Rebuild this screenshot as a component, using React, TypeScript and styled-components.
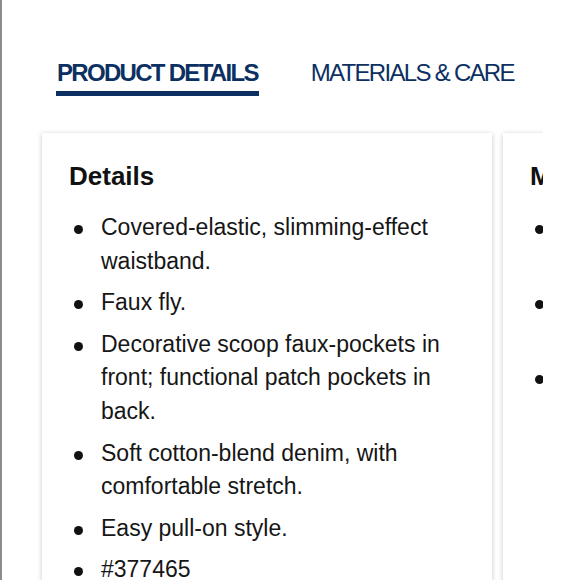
import React from 'react';
import styled, { createGlobalStyle } from 'styled-components';

const GlobalStyle = createGlobalStyle`
  html, body {
    margin: 0;
    padding: 0;
    background: #ffffff;
  }
  body {
    font-family: "Liberation Sans", Arial, sans-serif;
  }
`;

const tabs = [
  { id: 'details', label: 'PRODUCT DETAILS' },
  { id: 'care', label: 'MATERIALS & CARE' },
];

const sections = [
  {
    title: 'Details',
    items: [
      'Covered-elastic, slimming-effect waistband.',
      'Faux fly.',
      'Decorative scoop faux-pockets in front; functional patch pockets in back.',
      'Soft cotton-blend denim, with comfortable stretch.',
      'Easy pull-on style.',
      '#377465',
    ],
  },
  {
    title: 'Materials & Care',
    items: [
      'Cotton/polyester/spandex, stretch denim blend.',
      'Machine wash cold, tumble dry low heat.',
      'Imported.',
    ],
  },
];

const App: React.FC = () => {
  const active = 'details';

  return (
    <>
      <GlobalStyle />
      <Page>
        <TabBar>
          {tabs.map(tab => (
            <Tab key={tab.id} active={tab.id === active}>
              {tab.label}
            </Tab>
          ))}
        </TabBar>
        <Viewport>
          <Track>
            {sections.map(section => (
              <Card key={section.title}>
                <CardTitle>{section.title}</CardTitle>
                <List>
                  {section.items.map(item => (
                    <Item key={item}>{item}</Item>
                  ))}
                </List>
              </Card>
            ))}
          </Track>
        </Viewport>
      </Page>
    </>
  );
};

const Page = styled.div`
  box-sizing: border-box;
  height: 580px;
  overflow: hidden;
  border-left: 2px solid #8c8c8c;
  padding-left: 34px;
`;

const TabBar = styled.nav`
  display: flex;
  gap: 51px;
  padding: 58px 0 0 20px;
`;

const Tab = styled.button<{ active: boolean }>`
  border: none;
  background: none;
  margin: 0;
  padding: 0 1px 3px;
  white-space: nowrap;
  font-family: "Liberation Sans", Arial, sans-serif;
  font-size: 24px;
  line-height: 30px;
  letter-spacing: -1.7px;
  font-weight: ${props => (props.active ? 700 : 400)};
  color: #0c3061;
  border-bottom: 5px solid ${props => (props.active ? '#0c3061' : 'transparent')};
  cursor: pointer;
`;

const Viewport = styled.div`
  width: 507px;
  overflow: hidden;
  margin-top: 31px;
  padding: 6px 0 0 6px;
  box-sizing: border-box;
`;

const Track = styled.div`
  display: flex;
  gap: 11px;
`;

const Card = styled.section`
  flex: 0 0 450px;
  box-sizing: border-box;
  min-height: 520px;
  padding: 28px 24px 20px 27px;
  background: #ffffff;
  box-shadow: 0 1px 5px rgba(0, 0, 0, 0.22);
`;

const CardTitle = styled.h3`
  margin: 0;
  font-size: 26px;
  line-height: 30px;
  font-weight: 700;
  color: #111111;
`;

const List = styled.ul`
  margin: 20px 0 0;
  padding-left: 32px;
  list-style: none;
`;

const Item = styled.li`
  position: relative;
  font-size: 23px;
  line-height: 33.7px;
  color: #161616;
  margin-bottom: 7.8px;

  &::before {
    content: '';
    position: absolute;
    left: -27px;
    top: 14px;
    width: 9px;
    height: 9px;
    border-radius: 50%;
    background: #111111;
  }
`;

export default App;
